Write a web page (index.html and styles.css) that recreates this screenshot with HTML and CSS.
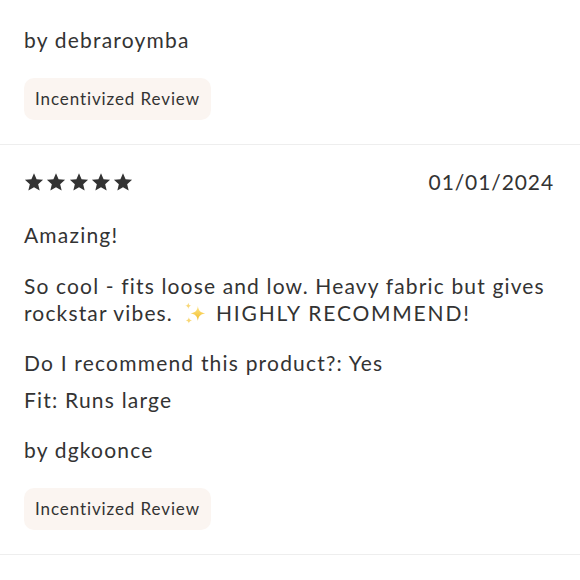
FILE: index.html
```html
<!DOCTYPE html>
<html lang="en">
<head>
<meta charset="utf-8">
<link rel="stylesheet" href="styles.css">
</head>
<body>
<section class="review review-partial">
  <p class="author">by debraroymba</p>
  <span class="badge">Incentivized Review</span>
</section>
<section class="review">
  <div class="review-head">
    <div class="stars" aria-label="5 stars">
      <svg class="star" viewBox="0 0 24 24"><path d="M12 1.5l3.1 7.2 7.8.7-5.9 5.2 1.8 7.7L12 18.3l-6.8 4 1.8-7.7L1.1 9.4l7.8-.7z"/></svg>
      <svg class="star" viewBox="0 0 24 24"><path d="M12 1.5l3.1 7.2 7.8.7-5.9 5.2 1.8 7.7L12 18.3l-6.8 4 1.8-7.7L1.1 9.4l7.8-.7z"/></svg>
      <svg class="star" viewBox="0 0 24 24"><path d="M12 1.5l3.1 7.2 7.8.7-5.9 5.2 1.8 7.7L12 18.3l-6.8 4 1.8-7.7L1.1 9.4l7.8-.7z"/></svg>
      <svg class="star" viewBox="0 0 24 24"><path d="M12 1.5l3.1 7.2 7.8.7-5.9 5.2 1.8 7.7L12 18.3l-6.8 4 1.8-7.7L1.1 9.4l7.8-.7z"/></svg>
      <svg class="star" viewBox="0 0 24 24"><path d="M12 1.5l3.1 7.2 7.8.7-5.9 5.2 1.8 7.7L12 18.3l-6.8 4 1.8-7.7L1.1 9.4l7.8-.7z"/></svg>
    </div>
    <span class="date">01/01/2024</span>
  </div>
  <h3 class="title">Amazing!</h3>
  <p class="body">So cool - fits loose and low. Heavy fabric but gives rockstar vibes.<svg class="sparkles" viewBox="0 0 24 24" aria-label="sparkles"><defs><linearGradient id="sp" x1="0" y1="0" x2="0" y2="1"><stop offset="0" stop-color="#fde68a"/><stop offset="1" stop-color="#f3bc28"/></linearGradient></defs><path fill="url(#sp)" d="M15 4.5c.6 4.2 2.3 5.9 6.5 6.5-4.2.6-5.9 2.3-6.5 6.5-.6-4.2-2.3-5.9-6.5-6.5 4.2-.6 5.9-2.3 6.5-6.5z"/><path fill="#f8d776" d="M6.5 1.5c.3 1.8 1 2.5 2.8 2.8-1.8.3-2.5 1-2.8 2.8-.3-1.8-1-2.5-2.8-2.8 1.8-.3 2.5-1 2.8-2.8zM7 14.5c.3 1.8 1 2.5 2.8 2.8-1.8.3-2.5 1-2.8 2.8-.3-1.8-1-2.5-2.8-2.8 1.8-.3 2.5-1 2.8-2.8z"/></svg><span class="caps">HIGHLY RECOMMEND!</span></p>
  <div class="meta">
    <p class="meta-line">Do I recommend this product?: Yes</p>
    <p class="meta-line">Fit: Runs large</p>
  </div>
  <p class="author">by dgkoonce</p>
  <span class="badge">Incentivized Review</span>
</section>
</body>
</html>
```
FILE: styles.css
```css
html, body {
  margin: 0;
  padding: 0;
  background: #ffffff;
}
body {
  font-family: Lato, "Open Sans", sans-serif;
  color: #333333;
  width: 580px;
}
p, h3 {
  margin: 0;
}
.review {
  display: flex;
  flex-direction: column;
  align-items: flex-start;
  padding: 0 26px 24px 24px;
  border-bottom: 1px solid #eeeeee;
}
.review-partial {
  padding-top: 26px;
}
.review + .review {
  padding-top: 23px;
}
.author {
  font-size: 21px;
  line-height: 28px;
  letter-spacing: 1.2px;
}
.badge {
  margin-top: 24px;
  background: #fbf5f1;
  border-radius: 10px;
  padding: 7px 11px 8px;
  font-size: 17px;
  line-height: 27px;
  letter-spacing: 0.9px;
}
.review-head {
  align-self: stretch;
  display: flex;
  justify-content: space-between;
  align-items: center;
}
.stars {
  display: flex;
  gap: 2.3px;
}
.star {
  width: 20px;
  height: 20px;
  fill: #333333;
}
.date {
  font-size: 21px;
  line-height: 28px;
  letter-spacing: 0.9px;
}
.title {
  margin-top: 25px;
  font-size: 21px;
  line-height: 28px;
  font-weight: 400;
  letter-spacing: 1.2px;
}
.body {
  margin-top: 23px;
  font-size: 21px;
  line-height: 27px;
  letter-spacing: 1.15px;
}
.sparkles {
  width: 27px;
  height: 27px;
  margin: -6px 8px -6px 8px;
  vertical-align: -1px;
}
.caps {
  letter-spacing: 1.8px;
}
.meta {
  margin-top: 23px;
  display: flex;
  flex-direction: column;
  gap: 9px;
}
.meta-line {
  font-size: 21px;
  line-height: 28px;
  letter-spacing: 1.2px;
}
.review .meta + .author {
  margin-top: 22px;
}
```
